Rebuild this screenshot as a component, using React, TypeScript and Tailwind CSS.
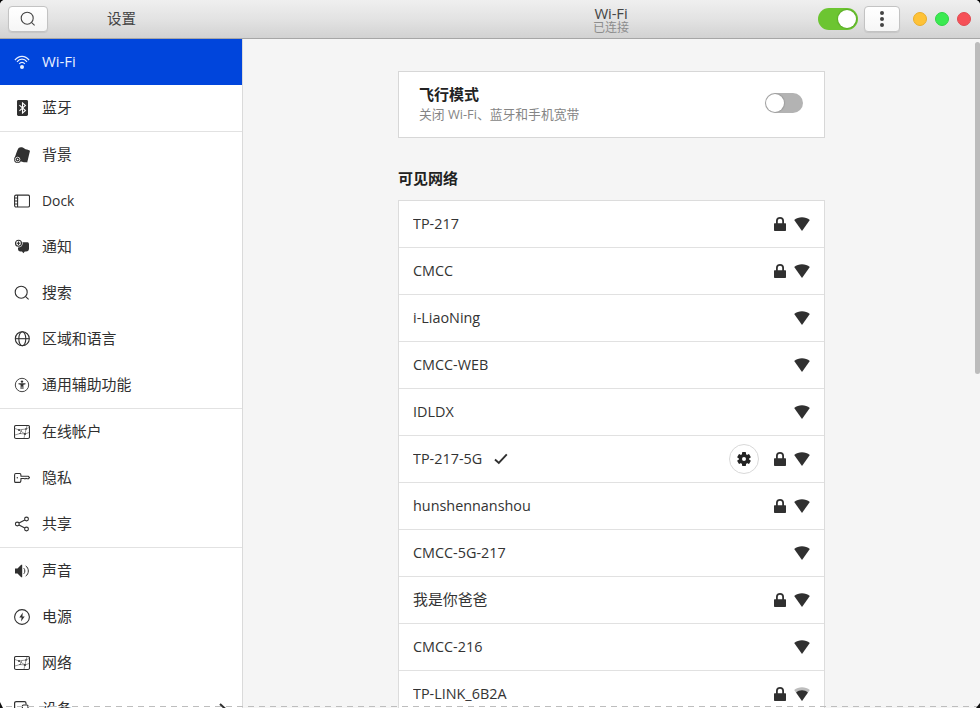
import type { ReactNode } from "react";

const stroke = { fill: "none", stroke: "currentColor", strokeWidth: 1 } as const;

function Icon({ children, className = "" }: { children: ReactNode; className?: string }) {
  return (
    <svg width="16" height="16" viewBox="0 0 16 16" className={"shrink-0 " + className}>
      {children}
    </svg>
  );
}

const SearchShape = () => (
  <g {...stroke} strokeWidth={1.1}>
    <circle cx="7.2" cy="7.2" r="6" />
    <path d="M11.4 11.4L14.6 14.4" />
  </g>
);

const NetShape = () => (
  <g {...stroke}>
    <rect x="0.5" y="1.5" width="15" height="13" rx="1.5" strokeWidth="1.1" />
    <path
      d="M1 4.5L5 6L8 5.5L12 5L15 3.5M12 5L13 2M1 11L6 9.5L11 10L15 8.5M11 10L10 14M5 6L11 10M12 5L11 10M6 9.5L8 5.5"
      strokeWidth="0.5"
    />
    <g fill="currentColor" stroke="none">
      <circle cx="5" cy="6" r="0.9" />
      <circle cx="12" cy="5" r="0.8" />
      <circle cx="11" cy="10" r="0.9" />
      <circle cx="6" cy="9.5" r="0.6" />
    </g>
  </g>
);

const shapes: Record<string, ReactNode> = {
  wifi: (
    <g fill="none" stroke="currentColor" strokeWidth="1.2">
      <circle cx="8" cy="13" r="2" fill="currentColor" stroke="none" />
      <path d="M.9 6.2C4.8 1 11.2 1 15.1 6.2M3 7.9C5.8 4.3 10.2 4.3 13 7.9M5.2 9.8C6.8 7.8 9.2 7.8 10.8 9.8" />
    </g>
  ),
  bluetooth: (
    <g>
      <rect x="3" y="0" width="11" height="16" rx="1.4" fill="currentColor" />
      <path d="M5.4 5.2L11.4 10.6L8.5 13V3L11.4 5.4L5.4 10.8" fill="none" stroke="#fff" strokeWidth="1.1" />
    </g>
  ),
  background: (
    <g>
      <path d="M4.6.9C6.2-.3 8.9 0 10.4 1.6C11.8 3 14 2.4 16 3.8L13.2 15.6C11.8 14.8 10.4 15.8 9 15L7.2 14.6L.6 11C2 7.5 3 3 4.6.9Z" fill="currentColor" />
      <circle cx="3.6" cy="12.5" r="3.5" fill="#303030" />
      <circle cx="3.6" cy="12.5" r="2.3" fill="none" stroke="#fff" strokeWidth=".8" />
      <circle cx="3.6" cy="12.5" r=".8" fill="#fff" />
    </g>
  ),
  dock: (
    <g {...stroke} strokeWidth={1.1}>
      <rect x="0.6" y="2.1" width="14.9" height="11.9" rx="1.4" />
      <path d="M3.6 2V14M.6 5H3.6M.6 8H3.6M.6 11H3.6" />
    </g>
  ),
  notify: (
    <g>
      <path d="M5.2 3.2H13.6C14.7 3.2 15 4.4 15 5.5V9.6C15 11.5 14 12.5 12 12.5H10.8L9.4 14.3L8 12.5H6.6C4.7 12.5 4 11.6 4 9.6V7Z" fill="currentColor" />
      <circle cx="4.5" cy="4.3" r="4.1" fill="#fff" />
      <circle cx="4.5" cy="4.3" r="3" fill="#fff" stroke="currentColor" strokeWidth="1.1" />
      <path d="M4.5 2.5V6.1M2.7 4.3H6.3" stroke="currentColor" strokeWidth="1.1" />
    </g>
  ),
  search: <SearchShape />,
  region: (
    <g {...stroke} strokeWidth={1.1}>
      <circle cx="8.3" cy="7.7" r="7" />
      <ellipse cx="8.3" cy="7.7" rx="3.5" ry="7" />
      <path d="M1.3 7.7H15.3" />
    </g>
  ),
  access: (
    <g>
      <circle cx="8" cy="8" r="6.7" {...stroke} strokeWidth={0.9} />
      <circle cx="8" cy="4.6" r="1.2" fill="currentColor" />
      <path d="M4.5 6.3H11.5V7.2L9.4 7.7V12H8.4V9.6H7.6V12H6.6V7.7L4.5 7.2Z" fill="currentColor" />
    </g>
  ),
  net: <NetShape />,
  privacy: (
    <g {...stroke} strokeWidth={1.1}>
      <path d="M1.8 3.5H5.8C6.8 3.5 7 4.2 7 6.3H14.3L15.5 7.5L14.6 8.7H13L12 8.3L11 8.9L10 8.5H7C7 11.4 6.7 12.4 5.6 12.4H1.8C.8 12.4.6 12 .6 11V5.1C.6 4.1.9 3.5 1.8 3.5Z" />
      <circle cx="3.3" cy="7.7" r=".7" fill="currentColor" stroke="none" />
    </g>
  ),
  share: (
    <g {...stroke} strokeWidth={1.1}>
      <circle cx="3.3" cy="8" r="1.9" />
      <circle cx="12.5" cy="3" r="1.9" />
      <circle cx="12.5" cy="13" r="1.9" />
      <path d="M5 7.1L10.8 3.9M5 8.9L10.8 12.1" />
    </g>
  ),
  sound: (
    <g>
      <path d="M1 5.5H3.5L7.2 1.8H8.2V14.2H7.2L3.5 10.5H1Z" fill="currentColor" />
      <path d="M9.8 5.2C11.2 6.6 11.2 9.4 9.8 10.8M11.7 2.9C15.2 5.2 15.2 10.8 11.7 13.1" {...stroke} strokeWidth={1} />
    </g>
  ),
  power: (
    <g>
      <circle cx="8" cy="8" r="7.4" {...stroke} strokeWidth={1.1} />
      <path d="M8.8 3.6L5.3 8.6H7.6L7 12.6L10.7 7.4H8.4Z" fill="currentColor" />
    </g>
  ),
  devices: (
    <g {...stroke} strokeWidth={1.2}>
      <path d="M8 13H2.2C1 13 .6 12.5 .6 11.5V2.2C.6 1 1.2.6 2.2.6H10.5C11.5.6 12 1.2 12 2.2V3.5" />
      <rect x="8.4" y="4" width="5.6" height="10" rx="1" />
    </g>
  ),
};

const groups: { id: string; label: string }[][] = [
  [
    { id: "wifi", label: "Wi-Fi" },
    { id: "bluetooth", label: "蓝牙" },
  ],
  [
    { id: "background", label: "背景" },
    { id: "dock", label: "Dock" },
    { id: "notify", label: "通知" },
    { id: "search", label: "搜索" },
    { id: "region", label: "区域和语言" },
    { id: "access", label: "通用辅助功能" },
  ],
  [
    { id: "net", label: "在线帐户" },
    { id: "privacy", label: "隐私" },
    { id: "share", label: "共享" },
  ],
  [
    { id: "sound", label: "声音" },
    { id: "power", label: "电源" },
    { id: "net", label: "网络" },
    { id: "devices", label: "设备" },
  ],
];

type Network = { name: string; locked?: boolean; active?: boolean; weak?: boolean };

const networks: Network[] = [
  { name: "TP-217", locked: true },
  { name: "CMCC", locked: true },
  { name: "i-LiaoNing" },
  { name: "CMCC-WEB" },
  { name: "IDLDX" },
  { name: "TP-217-5G", locked: true, active: true },
  { name: "hunshennanshou", locked: true },
  { name: "CMCC-5G-217" },
  { name: "我是你爸爸", locked: true },
  { name: "CMCC-216" },
  { name: "TP-LINK_6B2A", locked: true, weak: true },
];

// Latin names are set slightly condensed; Chinese ones keep their full width.
const isLatin = (text: string) => /^[\x20-\x7e]+$/.test(text);

function Signal({ weak }: { weak?: boolean }) {
  return (
    <Icon>
      <path d="M8 15L.2 3.9C4.4.3 11.6.3 15.8 3.9Z" fill={weak ? "#bdbdbd" : "#303030"} />
      {weak && <path d="M8 15L2.1 6.6C5.2 3.4 10.8 3.4 13.9 6.6Z" fill="#303030" />}
    </Icon>
  );
}

function Lock() {
  return (
    <Icon>
      <path d="M2.6 7.2H13.4Q14 7.2 14 7.8V14.2Q14 15 13.2 15H2.8Q2 15 2 14.2V7.8Q2 7.2 2.6 7.2Z" fill="#303030" />
      <path d="M4.9 8V4.8C4.9 .8 11.1 .8 11.1 4.8V8" fill="none" stroke="#303030" strokeWidth="1.8" />
    </Icon>
  );
}

function Gear() {
  return (
    <Icon>
      <g fill="#242424">
        {[0, 60, 120].map((a) => (
          <rect key={a} x="6" y="1.1" width="4" height="13.8" rx=".7" transform={`rotate(${a} 8 8)`} />
        ))}
        <circle cx="8" cy="8" r="5.2" />
      </g>
      <circle cx="8" cy="8" r="2" fill="#fff" />
    </Icon>
  );
}

function Header() {
  return (
    <header className="flex h-[39px] shrink-0 border-b border-[#a6a6a6] bg-linear-to-b from-[#efefef] via-[#e3e3e3] to-[#d2d2d2]">
      <div className="flex w-[242px] items-center pl-2">
        <button className="flex h-[26px] w-10 items-center justify-center rounded-[4px] border border-[#c3c3c3] bg-linear-to-b from-white to-[#f6f6f6] text-[#454545] shadow-[0_1px_1px_rgba(0,0,0,0.08)]">
          <Icon>
            <SearchShape />
          </Icon>
        </button>
        <h1 className="ml-[59px] text-[14.5px] leading-5 text-[#444]">设置</h1>
      </div>
      <div className="flex flex-1 flex-col items-center pl-[162px] pt-[6px]">
        <h2 className="text-[14.9px] leading-[14px] tracking-[-0.1px] text-[#454545]">Wi-Fi</h2>
        <p className="pt-px text-[12px] leading-[14px] text-[#8c8c8c]">已连接</p>
      </div>
      <div className="flex w-[162px] items-center">
        <div className="flex h-[22px] w-10 items-center justify-end rounded-full bg-[#6cc531] pr-[2px]">
          <div className="size-[18px] rounded-full bg-white shadow-[0_0_1px_1px_rgba(60,130,20,0.35)]" />
        </div>
        <button className="ml-[6px] flex h-[26px] w-9 flex-col items-center justify-center gap-[2px] rounded-[4px] border border-[#c3c3c3] bg-linear-to-b from-white to-[#f6f6f6] shadow-[0_1px_1px_rgba(0,0,0,0.08)]">
          <i className="size-1 rounded-full bg-[#444]" />
          <i className="size-1 rounded-full bg-[#444]" />
          <i className="size-1 rounded-full bg-[#444]" />
        </button>
        <div className="ml-[13px] flex gap-2">
          <i className="size-[14px] rounded-full border border-[#e9ad2b] bg-[#fec237]" />
          <i className="size-[14px] rounded-full border border-[#30d546] bg-[#3bea51]" />
          <i className="size-[14px] rounded-full border border-[#df4b51] bg-[#f65057]" />
        </div>
      </div>
    </header>
  );
}

function Sidebar() {
  return (
    <nav className="w-[243px] shrink-0 overflow-hidden border-r border-[#dadada] bg-white">
      {groups.map((group, g) => (
        <ul key={g} className={g < groups.length - 1 ? "border-b border-[#e2e2e2]" : ""}>
          {group.map((item) => (
            <li
              key={item.label}
              className={
                "flex h-[46px] items-center pl-[14px] text-[14.9px] leading-5 " +
                (item.id === "wifi" ? "bg-[#0045dc] text-[#e8f0ff]" : "text-[#303030]")
              }
            >
              <Icon>{shapes[item.id]}</Icon>
              <span
                className={
                  "mb-0.5 ml-3 origin-left whitespace-nowrap " + (item.id === "dock" ? "scale-x-[0.93]" : "")
                }
              >
                {item.label}
              </span>
              {item.id === "devices" && (
                <Icon className="ml-auto mr-[11px]">
                  <path d="M5 3L10.5 8L5 13" fill="none" stroke="#303030" strokeWidth="2" />
                </Icon>
              )}
            </li>
          ))}
        </ul>
      ))}
    </nav>
  );
}

export default function App() {
  return (
    <div className="relative h-[708px] w-[980px] overflow-hidden bg-black font-['Open_Sans','Noto_Sans_CJK_SC',sans-serif]">
      <div className="flex h-full flex-col overflow-hidden rounded-t-[5px] bg-[#f5f5f5]">
        <Header />
        <div className="flex min-h-0 flex-1">
          <Sidebar />
          <main className="flex-1 overflow-hidden pl-[155px] pt-8">
            <section className="flex h-[67px] w-[427px] items-center justify-between border border-[#d7d7d7] bg-white pl-[20px] pr-[21px]">
              <div className="mb-0.5">
                <h3 className="text-[15px] font-bold leading-5 text-[#222]">飞行模式</h3>
                <p className="text-[12.8px] leading-5 text-[#858585]">关闭 Wi-Fi、蓝牙和手机宽带</p>
              </div>
              <div className="mb-[3px] flex h-5 w-[38px] items-center rounded-full bg-[#b3b3b3] pl-[1px]">
                <div className="size-[18px] rounded-full bg-white shadow-[0_0_1px_1px_rgba(0,0,0,0.12)]" />
              </div>
            </section>
            <h3 className="mt-[30px] text-[15px] font-bold leading-5 text-[#222]">可见网络</h3>
            <ul className="mt-[12px] w-[427px] border border-[#dcdcdc] bg-white">
              {networks.map((n) => (
                <li key={n.name} className="flex h-[47px] items-center border-b border-[#e1e1e1] pl-[14px] pr-[14px] text-[#333]">
                  <span className={"mb-0.5 origin-left text-[14.9px] leading-5 " + (isLatin(n.name) ? "scale-x-[0.966]" : "")}>
                    {n.name}
                  </span>
                  {n.active && (
                    <Icon className="ml-2">
                      <path d="M2 8.5L5.8 12L13.8 3.3" fill="none" stroke="#303030" strokeWidth="1.9" />
                    </Icon>
                  )}
                  <span className="flex-1" />
                  {n.active && (
                    <button className="mr-[13px] flex size-[30px] items-center justify-center rounded-full border border-[#d9d9d9] bg-white">
                      <Gear />
                    </button>
                  )}
                  {n.locked && <Lock />}
                  <span className="ml-[6px] flex">
                    <Signal weak={n.weak} />
                  </span>
                </li>
              ))}
            </ul>
          </main>
        </div>
      </div>
      <div className="absolute right-0 top-[42px] h-[332px] w-[5px] rounded-full bg-[#bcbcbc]" />
      <svg className="absolute bottom-0 left-0" width="980" height="6" viewBox="0 0 980 6">
        <path d="M6 4.5H980" stroke="#bdbdbd" strokeWidth="1" strokeDasharray="6 5" />
        <path d="M0 0L3 6H0ZM980 1L976 6H980Z" fill="#111" />
      </svg>
    </div>
  );
}
